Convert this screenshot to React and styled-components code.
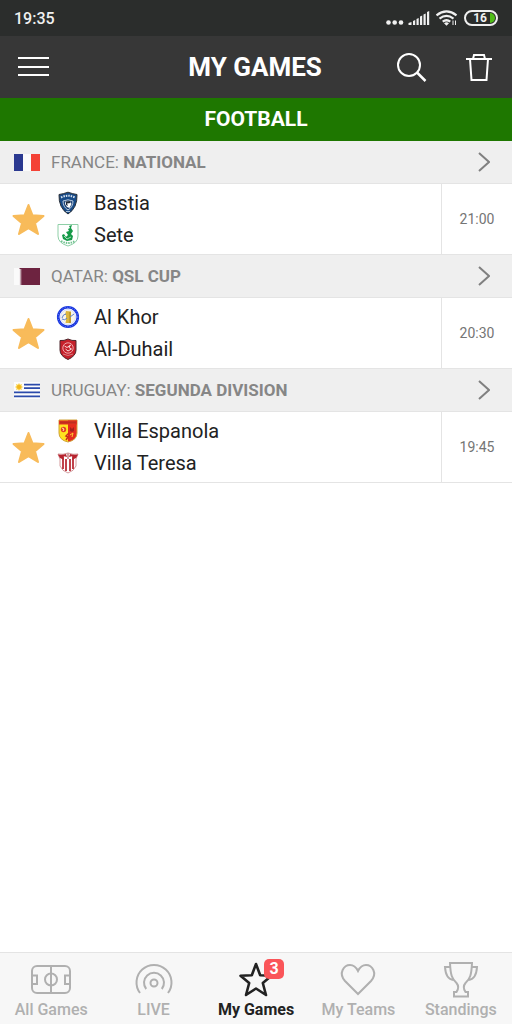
import React from "react";
import styled, { createGlobalStyle } from "styled-components";

const FranceFlag = () => (
  <svg width="26" height="17" viewBox="0 0 26 17" aria-hidden="true">
    <rect width="9" height="17" fill="#2b3990" />
    <rect x="9" width="8" height="17" fill="#fbfbfb" />
    <rect x="17" width="9" height="17" fill="#f44236" />
  </svg>
)

const QatarFlag = () => (
  <svg width="26" height="17" viewBox="0 0 26 17" aria-hidden="true">
    <rect width="26" height="17" fill="#fafafa" />
    <path d="M5.5 0H26V17H5.5L8 16L5.5 15L8 14L5.5 13L8 12L5.5 11L8 10L5.5 9L8 8L5.5 7L8 6L5.5 5L8 4L5.5 3L8 2L5.5 1Z" fill="#6d2340" />
  </svg>
)

const UruguayFlag = () => (
  <svg width="26" height="17" viewBox="0 0 26 17" aria-hidden="true">
    <rect width="26" height="17" fill="#fcfcfc" />
    <path d="M10 2.7H26M10 6.2H26M0 10.3H26M0 14.3H26" stroke="#2c4bab" strokeWidth="1.8" />
    <path d="M5 .9L6 2.7L8 2.1L7.3 4L9.1 5L7.3 6L8 7.9L6 7.2L5 9.1L4 7.2L2 7.9L2.7 6L.9 5L2.7 4L2 2.1L4 2.7Z" fill="#f9cf3d" />
    <circle cx="5" cy="5" r="2" fill="#f1b51d" />
  </svg>
)

const BastiaCrest = () => (
  <svg width="24" height="24" viewBox="0 0 24 24" aria-hidden="true">
    <path d="M3 3.5Q7 3 12 1.2Q17 3 21 3.5Q21.5 17 12 23Q2.5 17 3 3.5Z" fill="#174a87" stroke="#2a3038" />
    <path d="M5 6.5Q12 3 19 6.5" fill="none" stroke="#d7e2ef" strokeWidth="2" strokeDasharray="1.5 1" />
    <path d="M7 10Q12 7.5 17 10Q17 16 12 19Q7 16 7 10Z" fill="#1d4478" stroke="#b9cadf" />
    <path d="M9.5 10.5L14 10L15.5 13L13.5 17L11 16L9 13Z" fill="#fff" />
    <path d="M10 10.5L14 10L14.5 12L11 12.5L12 15L10 14Z" fill="#202a38" />
    <path d="M10 20.5H14" stroke="#a9c1dd" />
  </svg>
)

const SeteCrest = () => (
  <svg width="24" height="24" viewBox="0 0 24 24" aria-hidden="true">
    <path d="M2 1.5H22V13Q22 20 12 23Q2 20 2 13Z" fill="#fff" stroke="#8fcfa7" />
    <path d="M13 3L16 2L15 5L17 8L15 11L17 13L16 17L11 18L7 16L6 12L8 11L10 14L12 12L10 9L13 8L12 6L14 5Z" fill="#159a48" />
    <path d="M8 13L11 16L15 14" fill="none" stroke="#a8dcba" />
    <path d="M5 18Q12 22 19 18" fill="none" stroke="#6ec28e" strokeWidth="2" strokeDasharray="1.5 1" />
  </svg>
)

const AlKhorCrest = () => (
  <svg width="24" height="24" viewBox="0 0 24 24" aria-hidden="true">
    <circle cx="12" cy="12" r="9.8" fill="#fff" stroke="#1735e0" strokeWidth="2.6" />
    <circle cx="12" cy="12" r="9.8" fill="none" stroke="#7186f0" strokeDasharray="1 1.5" />
    <circle cx="12" cy="12" r="7.5" fill="#f7f5ec" stroke="#d7dcf5" />
    <path d="M10 6L15 6.5V18H9.5L10 15V10H9Z" fill="#dcb63e" />
    <path d="M14 7V18" stroke="#a68222" />
    <path d="M6 13Q7 9 10 9M6 14Q9 16 11 13M14 12L18 9" fill="none" stroke="#5c7fd0" />
  </svg>
)

const DuhailCrest = () => (
  <svg width="24" height="24" viewBox="0 0 24 24" aria-hidden="true">
    <path d="M4 3.5Q8 4 12 2Q16 4 20 3.5V13Q20 19 12 22.5Q4 19 4 13Z" fill="#c5202b" stroke="#4d272c" />
    <circle cx="12" cy="11" r="5.2" fill="none" stroke="#efa8ab" />
    <path d="M8.5 9L11 10.5L14.5 8L13 10.5L15.5 12L12 14L9.5 12" fill="none" stroke="#fbdcdc" />
    <path d="M7 17Q12 20 17 17" fill="none" stroke="#d67b7f" />
  </svg>
)

const EspanolaCrest = () => (
  <svg width="24" height="24" viewBox="0 0 24 24" aria-hidden="true">
    <path d="M3 1H12V23Q3 21 3 14Z" fill="#ffe21f" />
    <path d="M12 1H21V14Q21 21 12 23Z" fill="#e52c1d" />
    <path d="M3 1H21V14Q21 21 12 23Q3 21 3 14Z" fill="none" stroke="#d0a33b" />
    <rect x="3" y="1.5" width="18" height="4" fill="#e33420" />
    <path d="M4.5 3.5H19.5" stroke="#9c261c" strokeWidth="2" strokeDasharray="1 1" />
    <circle cx="7.5" cy="10.5" r="2.7" fill="#e64122" />
    <path d="M6 9L8 10L7 12" fill="none" stroke="#fff1a0" />
    <path d="M14 8L16 10L18 8V12L16 13L14 12Z" fill="#a3211b" />
    <path d="M13 14L10 17L12 18L10 21" fill="none" stroke="#c92a1c" strokeWidth="1.5" />
    <path d="M14 16L17 14L16 18" fill="none" stroke="#ffcb2d" />
  </svg>
)

const TeresaCrest = () => (
  <svg width="24" height="24" viewBox="0 0 24 24" aria-hidden="true">
    <path d="M2 3Q7 4 12 2Q17 4 22 3L20 8V15Q18 20 12 22Q6 20 4 15V8Z" fill="#fff" stroke="#d49a9d" />
    <path d="M7 5V18M10 8V20M14 8V20M17 5V18" stroke="#b7222d" strokeWidth="1.7" />
    <path d="M2 3.5Q7 4 10 3L11 6L7 5L8 9L4 7Z" fill="#b7222d" />
    <path d="M22 3.5Q17 4 14 3L13 6L17 5L16 9L20 7Z" fill="#b7222d" />
    <path d="M12 2.5V8" stroke="#a83a42" />
  </svg>
)

const COMPETITIONS = [
  {
    country: "FRANCE",
    league: "NATIONAL",
    Flag: FranceFlag,
    time: "21:00",
    teams: [
      { name: "Bastia", Crest: BastiaCrest },
      { name: "Sete", Crest: SeteCrest }
    ]
  },
  {
    country: "QATAR",
    league: "QSL CUP",
    Flag: QatarFlag,
    time: "20:30",
    teams: [
      { name: "Al Khor", Crest: AlKhorCrest },
      { name: "Al-Duhail", Crest: DuhailCrest }
    ]
  },
  {
    country: "URUGUAY",
    league: "SEGUNDA DIVISION",
    Flag: UruguayFlag,
    time: "19:45",
    teams: [
      { name: "Villa Espanola", Crest: EspanolaCrest },
      { name: "Villa Teresa", Crest: TeresaCrest }
    ]
  }
]

const PitchIcon = () => (
  <svg width="42" height="38" viewBox="0 0 42 38" aria-hidden="true">
    <rect x="2" y="5" width="38" height="27" rx="5" />
    <path d="M21 5V32M2 14.500H7V23H2M40 14.500H35V23H40" />
    <circle cx="21" cy="18.5" r="6" />
  </svg>
)

const LiveIcon = () => (
  <svg width="42" height="38" viewBox="0 0 42 38" aria-hidden="true">
    <circle cx="21" cy="22" r="3.5" />
    <path d="M13.2 28A10 10 0 1 1 28.8 28M7 32A17.5 17.5 0 1 1 35 32" />
  </svg>
)

const StarOutlineIcon = () => (
  <svg width="42" height="38" viewBox="0 0 42 38" aria-hidden="true">
    <path
      d="M21 3L25.2 14.2L36.5 14.8L27.8 22L31 34L21 27.5L11 34L14.2 22L5.5 14.8L16.8 14.2Z"
      strokeWidth="2.6"
      strokeLinejoin="round"
    />
  </svg>
)

const HeartIcon = () => (
  <svg width="42" height="38" viewBox="0 0 42 38" aria-hidden="true">
    <path d="M21 33L8 20C1 12 7 4 13 4C17 4 19 6 21 10C23 6 25 4 29 4C35 4 41 12 34 20Z" />
  </svg>
)

const TrophyIcon = () => (
  <svg width="42" height="38" viewBox="0 0 42 38" aria-hidden="true">
    <path d="M10 2H32C31.5 14 30 18 25.5 22C23 25 23.5 28 25.5 31H28V35.500H14V31H16.5C18.5 28 19 25 16.5 22C12 18 10.5 14 10 2Z" />
    <path d="M10 6H5C5.5 14 8 18.5 13.5 19M32 6H37C36.5 14 34 18.5 28.5 19" />
  </svg>
)

const TABS = [
  { label: "All Games", Icon: PitchIcon },
  { label: "LIVE", Icon: LiveIcon },
  { label: "My Games", Icon: StarOutlineIcon, active: true, count: 3 },
  { label: "My Teams", Icon: HeartIcon },
  { label: "Standings", Icon: TrophyIcon }
]

const StatusIcons = () => (
  <svg width="72" height="16" viewBox="0 0 72 16" fill="#f0f0f0" aria-hidden="true">
    <circle cx="2.5" cy="12.5" r="2.3" />
    <circle cx="8.7" cy="12.5" r="2.3" />
    <circle cx="15" cy="12.5" r="2.3" />
    <path d="M22.5 15V13L25.5 12V15ZM27 15V11L29.2 10V15ZM30.5 15V9L32.7 8V15ZM34 15V6.5L36.2 5.500V15ZM37.500 15V4.500L39.700 3.500V15ZM41 15V2L43.200 1V15Z" />
    <g fill="none" stroke="#f0f0f0" strokeWidth="2.2">
      <path d="M50.500 5.300Q60.500 -2.500 70.500 5.300M53.500 8.600Q60.500 3.200 67.500 8.600M56.700 11.700Q60.500 8.800 64.300 11.700" />
      <path d="M67 10.500V15M69.500 10.500V15" strokeWidth="1" />
    </g>
    <path d="M58 13.200Q60.500 11.500 63 13.200L60.500 15.800Z" />
  </svg>
)

const Competition = ({ country, league, Flag, time, teams }) => (
  <section>
    <LeagueLink href="#league">
      <Flag />
      <LeagueName>{country}: <strong>{league}</strong></LeagueName>
      <svg width="12" height="22" viewBox="0 0 12 22" fill="none" stroke="#808080" strokeWidth="2" aria-hidden="true">
        <path d="M1 2L11 11L1 20" />
      </svg>
    </LeagueLink>
    <Match>
      <FavouriteButton type="button" aria-label="Remove from my games">
        <svg width="33" height="33" viewBox="0 0 33 33" aria-hidden="true">
          <path
            d="M16.5 2L20.5 12.3L31.5 13L23 20.3L26 31L16.5 25.2L7 31L10 20.3L1.5 13L12.5 12.3Z"
            fill="#f8bb5a"
            stroke="#f8bb5a"
            strokeWidth="2"
            strokeLinejoin="round"
          />
        </svg>
      </FavouriteButton>
      <Teams>
        {teams.map(({ name, Crest }) => (
          <Team key={name}>
            <Crest />
            {name}
          </Team>
        ))}
      </Teams>
      <KickOff>{time}</KickOff>
    </Match>
  </section>
)

const App = () => (
  <Page>
    <GlobalStyle />
    <StatusBar>
      <span>19:35</span>
      <StatusRight>
        <StatusIcons />
        <Battery>
          16
          <BatteryLevel />
        </Battery>
      </StatusRight>
    </StatusBar>
    <Header>
      <IconButton type="button" aria-label="Menu">
        <svg width="31" height="30" viewBox="0 0 31 30" fill="none" stroke="#fff" strokeWidth="2">
          <path d="M0 6H31M0 15H31M0 23H31" />
        </svg>
      </IconButton>
      <Title>MY GAMES</Title>
      <HeaderActions>
        <IconButton type="button" aria-label="Search">
          <svg width="30" height="30" viewBox="0 0 30 30" fill="none" stroke="#fff" strokeWidth="2">
            <circle cx="12" cy="13" r="11" />
            <path d="M20 20.5L28.5 29" strokeWidth="2.5" />
          </svg>
        </IconButton>
        <IconButton type="button" aria-label="Delete all">
          <svg width="26" height="30" viewBox="0 0 26 30" fill="none" stroke="#fff" strokeWidth="2">
            <path d="M0 7H26M7 7L8 3H18L19 7M4 7L5.5 28H20.5L22 7" />
          </svg>
        </IconButton>
      </HeaderActions>
    </Header>
    <SportTitle>FOOTBALL</SportTitle>
    <Content>
      {COMPETITIONS.map((competition) => (
        <Competition key={competition.country} {...competition} />
      ))}
    </Content>
    <TabBar>
      {TABS.map(({ label, Icon, active, count }) => (
        <Tab key={label} href="#tab" $active={active}>
          <TabIcon>
            <Icon />
            {count && <Badge>{count}</Badge>}
          </TabIcon>
          {label}
        </Tab>
      ))}
    </TabBar>
  </Page>
)

const GlobalStyle = createGlobalStyle`
  * {
    box-sizing: border-box;
  }

  body {
    margin: 0;
    font-family: Roboto, "Liberation Sans", sans-serif;
    color: #222;
    background-color: #fff;
  }

  svg {
    display: block;
    flex-shrink: 0;
  }
`

const Page = styled.div`
  display: flex;
  flex-direction: column;
  min-height: 100vh;
`

const StatusBar = styled.div`
  display: flex;
  align-items: center;
  justify-content: space-between;
  height: 36px;
  padding: 0 14px;
  font-size: 16px;
  font-weight: 500;
  color: #f0f0f0;
  background-color: #2b2d2c;
`

const StatusRight = styled.div`
  display: flex;
  align-items: center;
  gap: 6px;
`

const Battery = styled.div`
  display: flex;
  align-items: center;
  justify-content: flex-end;
  gap: 3px;
  width: 34px;
  height: 16px;
  padding: 1px;
  border: 2px solid #f0f0f0;
  border-radius: 8px;
  font-size: 12px;
  font-weight: 700;
  line-height: 12px;
`

const BatteryLevel = styled.span`
  width: 5px;
  height: 10px;
  border-radius: 0 5px 5px 0;
  background-color: #50bd18;
`

const Header = styled.header`
  display: grid;
  grid-template-columns: 1fr auto 1fr;
  align-items: center;
  height: 62px;
  padding: 0 20px 0 18px;
  background-color: #373737;
`

const Title = styled.h1`
  margin: 0;
  font-size: 26px;
  font-weight: 700;
  line-height: 32px;
  color: #fff;
`

const HeaderActions = styled.div`
  display: flex;
  justify-content: flex-end;
  gap: 39px;
`

const IconButton = styled.button`
  justify-self: start;
  padding: 0;
  border: none;
  background: none;
  cursor: pointer;
`

const SportTitle = styled.h2`
  margin: 0;
  font-size: 21px;
  font-weight: 700;
  line-height: 43px;
  text-align: center;
  color: #fff;
  background-color: #1e7700;
`

const Content = styled.main`
  flex: 1;
`

const LeagueLink = styled.a`
  display: flex;
  align-items: center;
  gap: 11px;
  height: 43px;
  padding: 0 22px 0 14px;
  border-bottom: 1px solid #e4e4e4;
  color: #868686;
  background-color: #efefef;
  text-decoration: none;
`

const LeagueName = styled.span`
  flex: 1;
  font-size: 17px;
`

const Match = styled.div`
  display: flex;
  height: 71px;
  border-bottom: 1px solid #e4e4e4;
`

const FavouriteButton = styled.button`
  display: flex;
  align-items: center;
  justify-content: center;
  width: 56px;
  padding: 0;
  border: none;
  background: none;
  cursor: pointer;
`

const Teams = styled.div`
  display: flex;
  flex: 1;
  flex-direction: column;
  justify-content: center;
`

const Team = styled.div`
  display: flex;
  align-items: center;
  gap: 14px;
  font-size: 20px;
  line-height: 32px;
`

const KickOff = styled.time`
  display: flex;
  align-items: center;
  justify-content: center;
  width: 71px;
  border-left: 1px solid #e4e4e4;
  font-size: 14px;
  color: #757575;
`

const TabBar = styled.nav`
  position: sticky;
  bottom: 0;
  display: flex;
  height: 72px;
  border-top: 1px solid #e4e4e4;
  background-color: #f7f7f7;
`

const Tab = styled.a`
  display: flex;
  flex: 1;
  flex-direction: column;
  align-items: center;
  gap: 1px;
  padding-top: 8px;
  font-size: 16px;
  font-weight: ${({ $active }) => $active ? 700 : 500};
  line-height: 20px;
  color: ${({ $active }) => $active ? "#222" : "#b0b0b0"};
  text-decoration: none;

  svg {
    fill: none;
    stroke: currentColor;
    stroke-width: 2px;
  }
`

const TabIcon = styled.span`
  position: relative;
`

const Badge = styled.span`
  position: absolute;
  top: -2px;
  right: -7px;
  width: 20px;
  border-radius: 5px;
  font-size: 16px;
  text-align: center;
  color: #fff;
  background-color: #fa5559;
`

export default App;
